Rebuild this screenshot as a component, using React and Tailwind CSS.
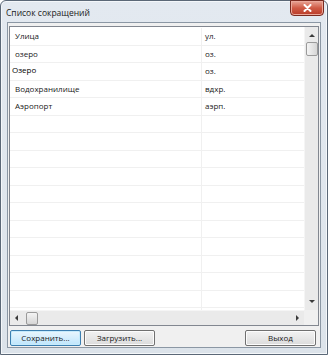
import React from "react";

const rows = [
  { name: "Улица", abbr: "ул." },
  { name: "озеро", abbr: "оз." },
  { name: "Озеро", abbr: "оз.", odd: true },
  { name: "Водохранилище", abbr: "вдхр." },
  { name: "Аэропорт", abbr: "аэрп." },
];

const TOTAL_ROWS = 17;

const Arrow = ({ dir }) => {
  const pts = {
    up: "0,4 3,1 6,4",
    down: "0,1 3,4 6,1",
    left: "4,0 1,3 4,6",
    right: "1,0 4,3 1,6",
  }[dir];
  const vertical = dir === "up" || dir === "down";
  return (
    <svg width={vertical ? 6 : 5} height={vertical ? 5 : 6} viewBox={vertical ? "0 0 6 5" : "0 0 5 6"}>
      <polygon points={pts} fill="#3a3a3a" />
    </svg>
  );
};

const Button = ({ children, primary }) => (
  <div
    className={
      "w-[71px] h-[16px] rounded-[2px] border flex items-center justify-center text-[8px] text-[#1a1a1a] " +
      (primary
        ? "border-[#3c7fb1] bg-gradient-to-b from-[#eaf6fd] to-[#bee6fd] shadow-[inset_0_0_0_1px_#c6ebfc]"
        : "border-[#707070] bg-gradient-to-b from-[#f2f2f2] to-[#dcdcdc] shadow-[inset_0_0_0_1px_#fcfcfc]")
    }
  >
    {children}
  </div>
);

export default function App() {
  const allRows = [...rows, ...Array(TOTAL_ROWS - rows.length).fill(null)];

  return (
    <div
      className="w-[328px] h-[355px] overflow-hidden bg-white"
      style={{ fontFamily: '"Open Sans", "Liberation Sans", sans-serif' }}
    >
      <div className="w-full h-full flex flex-col border border-[#5b6877] rounded-t-[6px] bg-gradient-to-b from-[#e3e9f0] to-[#dce3ea] shadow-[inset_0_0_0_1px_#f4f7fa]">
        {/* Title bar */}
        <div className="h-[21px] flex justify-between pl-[5px] pr-[3px]">
          <span className="text-[8.5px] leading-[21px] text-[#1a1a1a] pt-[1px]">Список сокращений</span>
          <div className="w-[34px] h-[16px] -mt-[1px] rounded-b-[4px] border border-[#7a2a1f] bg-gradient-to-b from-[#e8a597] via-[#cf5a45] to-[#b93b28] flex items-center justify-center shadow-[inset_0_0_0_1px_#eba99b]">
            <svg width="9" height="8" viewBox="0 0 9 8">
              <path d="M1.5 1 L7.5 7 M7.5 1 L1.5 7" stroke="#ffffff" strokeWidth="2" strokeLinecap="round" />
            </svg>
          </div>
        </div>

        {/* Client area */}
        <div className="flex-1 mx-[6px] mb-[6px] border border-[#8b97a4] bg-[#f0f0f0] flex flex-col pt-[3px] px-[1px]">
          {/* Table */}
          <div className="h-[300px] border border-[#828790] bg-white flex">
            <div className="flex-1 flex flex-col min-w-0">
              <div className="flex-1 overflow-hidden pt-[1px]">
                {allRows.map((r, i) => (
                  <div key={i} className="h-[17.5px] flex border-b border-[#f0f0f0] text-[8px] text-[#1a1a1a]">
                    <div className={"w-[192px] border-r border-[#f0f0f0] flex items-center " + (r?.odd ? "pl-[2px] pb-[2px] text-black" : "pl-[5px]")}>
                      {r?.name}
                    </div>
                    <div className="flex-1 flex items-center pl-[3px]">{r?.abbr}</div>
                  </div>
                ))}
              </div>
              {/* Horizontal scrollbar */}
              <div className="h-[15px] bg-[#eaeaea] flex items-center px-[4px] border-t border-[#f5f5f5]">
                <Arrow dir="left" />
                <div className="ml-[7px] w-[12px] h-[13px] rounded-[2px] border border-[#9a9a9a] bg-gradient-to-b from-[#f4f4f4] to-[#d6d6d6]" />
                <div className="flex-1" />
                <Arrow dir="right" />
              </div>
            </div>
            {/* Vertical scrollbar */}
            <div className="w-[14px] flex flex-col">
              <div className="flex-1 bg-[#eaeaea] flex flex-col items-center pt-[6px] pb-[6px] border-l border-[#f5f5f5]">
                <Arrow dir="up" />
                <div className="mt-[4px] w-[12px] h-[14px] rounded-[2px] border border-[#9a9a9a] bg-gradient-to-r from-[#f4f4f4] to-[#d6d6d6]" />
                <div className="flex-1" />
                <Arrow dir="down" />
              </div>
              <div className="h-[15px] bg-[#f0f0f0]" />
            </div>
          </div>

          {/* Buttons */}
          <div className="flex items-center pt-[4px] pl-[1px] pr-[3px] gap-[3px]">
            <Button primary>Сохранить...</Button>
            <Button>Загрузить...</Button>
            <div className="flex-1" />
            <Button>Выход</Button>
          </div>
        </div>
      </div>
    </div>
  );
}
